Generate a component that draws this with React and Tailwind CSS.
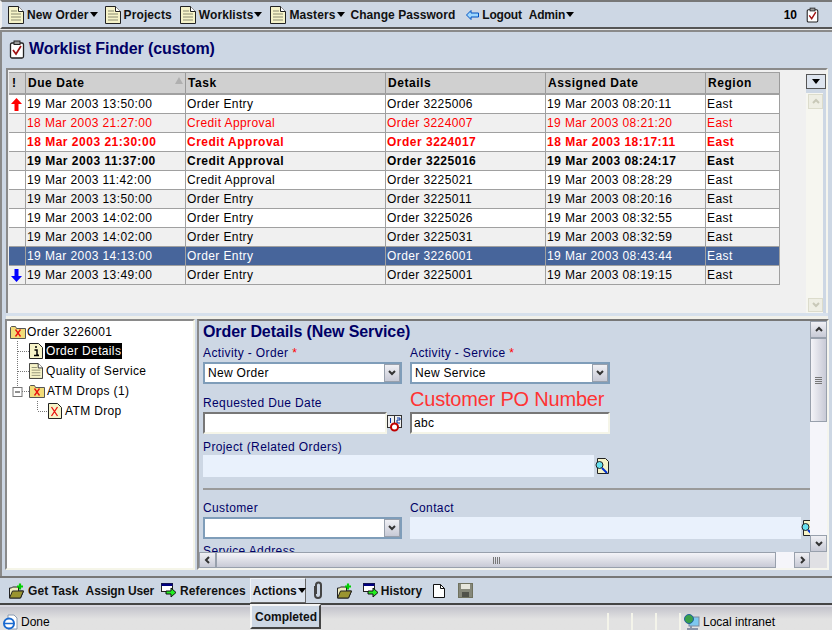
import React from 'react';

const ROWS = [
  ['19 Mar 2003 13:50:00', 'Order Entry', 'Order 3225006', '19 Mar 2003 08:20:11', 'up', ''],
  ['18 Mar 2003 21:27:00', 'Credit Approval', 'Order 3224007', '19 Mar 2003 08:21:20', '', 'text-[#ff0000]'],
  ['18 Mar 2003 21:30:00', 'Credit Approval', 'Order 3224017', '18 Mar 2003 18:17:11', '', 'text-[#ff0000] font-bold tracking-[0.5px]'],
  ['19 Mar 2003 11:37:00', 'Credit Approval', 'Order 3225016', '19 Mar 2003 08:24:17', '', 'text-black font-bold tracking-[0.5px]'],
  ['19 Mar 2003 11:42:00', 'Credit Approval', 'Order 3225021', '19 Mar 2003 08:28:29', '', 'text-black'],
  ['19 Mar 2003 13:50:00', 'Order Entry', 'Order 3225011', '19 Mar 2003 08:20:16', '', 'text-black'],
  ['19 Mar 2003 14:02:00', 'Order Entry', 'Order 3225026', '19 Mar 2003 08:32:55', '', 'text-black'],
  ['19 Mar 2003 14:02:00', 'Order Entry', 'Order 3225031', '19 Mar 2003 08:32:59', '', 'text-black'],
  ['19 Mar 2003 14:13:00', 'Order Entry', 'Order 3226001', '19 Mar 2003 08:43:44', '', 'text-white'],
  ['19 Mar 2003 13:49:00', 'Order Entry', 'Order 3225001', '19 Mar 2003 08:19:15', 'down', 'text-black'],
];

function PageIcon({ className = '', width = 16 }) {
  return (
    <svg width={width} height="18" viewBox="0 0 16 18" className={`shrink-0 ${className}`}>
      <path d="M.5.5h10l5 5v12H.5z" fill="#f6f3c8" stroke="#222" />
      <path d="M10.500.5v5h5" fill="#fff" stroke="#222" />
      <path d="M3 5h6M3 8h10M3 11h10M3 14h10" stroke="#8a8a70" />
    </svg>
  );
}

function Caret({ className = '' }) {
  return <span className={`inline-block w-0 h-0 border-l-[4px] border-r-[4px] border-t-[5px] border-l-transparent border-r-transparent border-t-black ${className}`} />;
}

function Clipboard({ size = 16 }) {
  return (
    <svg width={size} height={size + 3} viewBox="0 0 16 19" className="shrink-0">
      <rect x="1.500" y="3" width="13" height="15" rx="1.500" fill="#fff" stroke="#222" strokeWidth="1.300" />
      <rect x="5" y="1" width="6" height="3.500" fill="#999" stroke="#222" />
      <path d="M4 10l3 4 5-8" fill="none" stroke="#a01010" strokeWidth="1.700" />
    </svg>
  );
}

function FolderX({ className = '' }) {
  return (
    <svg width="16" height="14" viewBox="0 0 16 14" className={`shrink-0 ${className}`}>
      <path d="M.5 13.500v-11l1-1h4l1 2h9v10z" fill="#f2dc78" stroke="#555" />
      <path d="M5.500 4.500l5 7M10.500 4.500l-5 7" stroke="#e81010" strokeWidth="1.300" />
    </svg>
  );
}

function FolderPlus() {
  return (
    <svg width="17" height="16" viewBox="0 0 17 16" className="shrink-0">
      <path d="M1.500 15V5h2l1-1h6v4h5l-3 7z" fill="#f0eec0" stroke="#222" />
      <path d="M1.500 15l3-7h11l-3 7z" fill="#9a9430" stroke="#222" />
      <path d="M12 .5v6M9 3.500h6" stroke="#00d000" strokeWidth="2.200" />
    </svg>
  );
}

function RefArrow() {
  return (
    <svg width="16" height="15" viewBox="0 0 16 15" className="shrink-0">
      <rect x=".5" y=".5" width="11" height="8" fill="#fff" stroke="#222" />
      <rect x=".5" y=".5" width="11" height="2.500" fill="#000080" />
      <path d="M5 8h5V5l5 4.500-5 4.500v-3H5z" fill="#22ee22" stroke="#111" />
    </svg>
  );
}

function ToolItem({ label, icon, caret, className = '', textClass = 'tracking-[0.1px]' }) {
  return (
    <span className={`flex items-center whitespace-nowrap ${className}`}>
      {icon}
      <span className={`font-bold text-[12px] text-[#111] ${textClass}`}>{label}</span>
      {caret && <Caret className="ml-px" />}
    </span>
  );
}

function HeaderCell({ className, children }) {
  return (
    <div className={`h-[20px] flex items-center pl-[2px] font-bold text-[12px] tracking-[0.55px] bg-[#d0d0d0] border-r border-[#9a9a9a] ${className}`}>
      {children}
    </div>
  );
}

function WorkRow({ row, index }) {
  const [due, task, details, assigned, arrow, tone] = row;
  const selected = tone === 'text-white';
  const bg = selected ? 'bg-[#47659b]' : index % 2 === 0 ? 'bg-white' : 'bg-[#f0f0f0]';
  const cell = 'h-[19px] flex items-center pl-px border-r border-b border-[#a0a0a0] whitespace-nowrap';
  return (
    <div className={`flex text-[12px] tracking-[0.4px] ${bg} ${tone}`}>
      <div className={`${cell} w-[17px] !pl-[2px]`}>
        {arrow === 'up' && (
          <svg width="11" height="13" viewBox="0 0 11 13"><path d="M5.500 0L11 6H7.500v7h-4V6H0z" fill="#ff0000" /></svg>
        )}
        {arrow === 'down' && (
          <svg width="11" height="13" viewBox="0 0 11 13"><path d="M5.500 13L11 7H7.500V0h-4v7H0z" fill="#0000ff" /></svg>
        )}
      </div>
      <div className={`${cell} w-[160px]`}>{due}</div>
      <div className={`${cell} w-[200px]`}>{task}</div>
      <div className={`${cell} w-[160px]`}>{details}</div>
      <div className={`${cell} w-[160px]`}>{assigned}</div>
      <div className={`${cell} w-[74px]`}>East</div>
    </div>
  );
}

function Chevron({ dir = 'down', light }) {
  const d = { down: 'M2 3l3 3 3-3', up: 'M2 6l3-3 3 3', left: 'M6 2L3 5l3 3', right: 'M4 2l3 3-3 3' }[dir];
  return (
    <svg width="10" height="10" viewBox="0 0 10 10">
      <path d={d} fill="none" stroke={light ? '#c8c8b8' : '#333'} strokeWidth="2" />
    </svg>
  );
}

function ScrollBtn({ dir, className = '', light }) {
  return (
    <div className={`flex items-center justify-center border ${light ? 'border-[#dcdccc] bg-[#eeeee4]' : 'border-[#98a0ac] bg-gradient-to-b from-[#f0f0f4] to-[#c8cad6]'} ${className}`}>
      <Chevron dir={dir} light={light} />
    </div>
  );
}

function Select({ value, className = '' }) {
  return (
    <div className={`h-[22px] flex items-center bg-white border-2 border-[#7f9db9] text-[12px] text-black tracking-[0.3px] ${className}`}>
      <span className="flex-1 pl-[3px]">{value}</span>
      <ScrollBtn dir="down" className="w-[16px] h-[18px]" />
    </div>
  );
}

function SunkenInput({ value, className = '' }) {
  return (
    <div className={`h-[22px] flex items-center pl-[2px] bg-white border-2 border-t-[#777] border-l-[#777] border-r-[#f5f5e8] border-b-[#f5f5e8] text-[12px] text-black tracking-[0.3px] ${className}`}>
      {value}
    </div>
  );
}

function Label({ children, className = '' }) {
  return <div className={`text-[12px] leading-[14px] text-[#000066] tracking-[0.38px] whitespace-nowrap ${className}`}>{children}</div>;
}

function SearchDoc() {
  return (
    <svg width="14" height="16" viewBox="0 0 14 16" className="shrink-0">
      <path d="M2.500.5h8l3 3v12h-11z" fill="#f6f3c8" stroke="#222" />
      <circle cx="4.500" cy="7" r="3.500" fill="#66e0f0" stroke="#222" />
      <path d="M7 10l5 5" stroke="#0030d0" strokeWidth="2" />
    </svg>
  );
}

function TreeRow({ guide, icon, label, selected, labelClass = 'ml-[2px]', className = '' }) {
  return (
    <div className={`flex items-center h-[20px] ${className}`}>
      {guide}
      {icon}
      <span className={`px-px text-[12px] leading-[16px] tracking-[0.35px] whitespace-nowrap ${labelClass} ${selected ? 'bg-black text-white' : 'text-black'}`}>{label}</span>
    </div>
  );
}

function Guide({ last, minus, width = 12 }) {
  return (
    <svg width={width} height="20" viewBox={`0 0 ${width} 20`} className="shrink-0 overflow-visible">
      <path d={last ? 'M.5 0v10' : 'M.5 0v20'} stroke="#777" strokeDasharray="1 1" />
      <path d={`M1 10.500h${width}`} stroke="#777" strokeDasharray="1 1" />
      {minus && <rect x="-4" y="6.500" width="9" height="9" fill="#fff" stroke="#777" />}
      {minus && <path d="M-2 11h5" stroke="#222" />}
    </svg>
  );
}

export default function App() {
  return (
    <div className="relative w-[832px] h-[630px] overflow-hidden flex flex-col bg-[#cdd7e4] text-black font-['Liberation_Sans',Arial,sans-serif]">
      {/* main toolbar */}
      <div className="h-[29px] shrink-0 flex items-center border-t-2 border-b-2 border-t-[#777] border-b-[#555] border-l-2 border-l-[#f0f0f0] pl-[6px]">
        <ToolItem label="New Order" caret icon={<PageIcon className="mr-[3px]" />} />
        <ToolItem label="Projects" icon={<PageIcon className="mr-[3px]" />} className="ml-[7px]" />
        <ToolItem label="Worklists" caret icon={<PageIcon className="mr-[3px]" />} className="ml-[8px]" />
        <ToolItem label="Masters" caret icon={<PageIcon className="mr-[3px]" />} className="ml-[8px]" />
        <ToolItem label="Change Password" className="ml-[6px]" textClass="tracking-[0.05px]" />
        <ToolItem
          label="Logout"
          className="ml-[11px]"
          textClass="tracking-[-0.2px]"
          icon={
            <svg width="13" height="10" viewBox="0 0 13 10" className="mr-[3px]">
              <path d="M.5 5L5 .5V3h7.500v4H5v2.500z" fill="#9ed8ff" stroke="#0050c0" />
            </svg>
          }
        />
        <ToolItem label="Admin" caret className="ml-[7px]" textClass="tracking-[-0.2px]" />
        <span className="ml-auto font-bold text-[12px]">10</span>
        <span className="ml-[9px] mr-[13px]"><Clipboard size={13} /></span>
      </div>
      <div className="h-[3px] shrink-0 border-b-2 border-[#8a8a8a] bg-[#e8e8e8]" />

      <div className="shrink-0 flex flex-col border-l-2 border-[#8a8a8a]">
        {/* worklist title */}
        <div className="h-[36px] shrink-0 flex items-center pl-[7px] pb-[2px]">
          <Clipboard size={16} />
          <span className="ml-[4px] text-[16px] font-bold text-[#000066] tracking-[-0.1px]">Worklist Finder (custom)</span>
        </div>

        {/* worklist table */}
        <div className="h-[245px] shrink-0 ml-[4px] mr-[4px] flex bg-[#f0f0f0] border-2 border-b-0 border-t-[#8a8a8a] border-l-[#8a8a8a] border-r-[#f5f5ee]">
          <div className="w-[798px] pl-px pt-[2px] overflow-hidden">
            <div className="flex border-t border-b-2 border-[#a0a0a0] w-[771px]">
              <HeaderCell className="w-[17px] !pl-[3px]">!</HeaderCell>
              <HeaderCell className="w-[160px] relative">
                Due Date
                <span className="absolute right-[2px] top-[4px] w-0 h-0 border-l-[4px] border-r-[4px] border-b-[7px] border-l-transparent border-r-transparent border-b-[#b0b0b0]" />
              </HeaderCell>
              <HeaderCell className="w-[200px]">Task</HeaderCell>
              <HeaderCell className="w-[160px]">Details</HeaderCell>
              <HeaderCell className="w-[160px]">Assigned Date</HeaderCell>
              <HeaderCell className="w-[74px]">Region</HeaderCell>
            </div>
            <div className="w-[771px]">
              {ROWS.map((row, i) => <WorkRow key={row[0] + row[2]} row={row} index={i} />)}
            </div>
          </div>
          <div className="flex-1 flex flex-col bg-[#cdd7e4]">
            <div className="h-[4px] bg-[#f0f0f0]" />
            <div className="h-[15px] flex items-center justify-center border border-[#555] bg-[#dde4ee]"><Caret /></div>
            <div className="h-[4px]" />
            <div className="flex-1 flex flex-col justify-between bg-[#f6f6f0] mr-[3px] pt-px pl-[2px]">
              <ScrollBtn dir="up" light className="h-[15px]" />
              <ScrollBtn dir="down" light className="h-[14px] mb-[1px]" />
            </div>
          </div>
        </div>
        <div className="ml-[4px] mr-[4px] h-[3px] bg-[#d6e0ec]" />
        <div className="ml-[4px] mr-[4px] h-[3px] bg-[#f0f0ea]" />

        {/* lower split */}
        <div className="h-[251px] shrink-0 ml-[3px] mr-[3px] flex">
          <div className="w-[190px] shrink-0 bg-white border-2 border-t-[#8a8a8a] border-l-[#8a8a8a] border-r-[#f5f5e8] border-b-[#f5f5e8] pl-[3px]">
            <TreeRow icon={<FolderX />} label="Order 3226001" labelClass="" className="h-[21px]" />
            <div className="pl-[7px] -mt-[1px]">
              <TreeRow
                guide={<Guide />}
                selected
                label="Order Details"
                icon={
                  <svg width="14" height="16" viewBox="0 0 14 16" className="shrink-0">
                    <path d="M.5.5h9l4 4v11H.5z" fill="#f6f3c8" stroke="#222" />
                    <path d="M7 3v2M5.500 7H8v5h1.500M5 12.500h5" stroke="#000" strokeWidth="1.500" fill="none" />
                  </svg>
                }
              />
              <TreeRow guide={<Guide />} label="Quality of Service" icon={<PageIcon width={14} />} />
              <TreeRow guide={<Guide last minus />} label="ATM Drops (1)" labelClass="ml-[1px]" icon={<FolderX />} />
              <div className="pl-[20px]">
                <TreeRow
                  guide={<Guide last width={11} />}
                  label="ATM Drop"
                  labelClass="ml-[2px]"
                  icon={
                    <svg width="14" height="16" viewBox="0 0 14 16" className="shrink-0">
                      <path d="M.5.5h9l4 4v11H.5z" fill="#f6f3c8" stroke="#222" />
                      <path d="M3.500 4l6 9M9.500 4l-6 9" stroke="#e81010" strokeWidth="1.300" />
                    </svg>
                  }
                />
              </div>
            </div>
          </div>

          <div className="w-[2px] shrink-0" />

          <div className="flex-1 min-w-0 flex flex-col border-2 border-t-[#777] border-l-[#8a8a8a] border-b-[#f5f5ee] border-r-[#f5f5ee]">
            <div className="flex-1 min-h-0 flex">
              <div className="flex-1 min-w-0 overflow-hidden pl-[4px] pt-[2px]">
                <div className="text-[16px] leading-[18px] font-bold text-[#000066] tracking-[-0.1px]">Order Details (New Service)</div>
                <div className="grid grid-cols-[207px_1fr] mt-[5px]">
                  <div>
                    <Label>Activity - Order <span className="text-[#ff0000]">*</span></Label>
                    <Select value="New Order" className="w-[199px] mt-[2px]" />
                    <Label className="mt-[12px]">Requested Due Date</Label>
                    <div className="flex items-center mt-[2px]">
                      <SunkenInput className="w-[184px]" />
                      <svg width="15" height="17" viewBox="0 0 15 17" className="shrink-0">
                        <rect x=".5" y=".5" width="14" height="12" fill="#f0f0f0" stroke="#333" />
                        <path d="M7.500 1v11" stroke="#333" />
                        <path d="M3.500 3v5M10 3h3v2h-3v3h3" stroke="#0030a0" fill="none" />
                        <circle cx="7.500" cy="12" r="3.500" fill="#fff" stroke="#c00000" strokeWidth="2" />
                      </svg>
                    </div>
                  </div>
                  <div>
                    <Label>Activity - Service <span className="text-[#ff0000]">*</span></Label>
                    <Select value="New Service" className="w-[200px] mt-[2px]" />
                    <div className="text-[20px] leading-[23px] text-[#ff3333] mt-[4px] tracking-[-0.2px] whitespace-nowrap">Customer PO Number</div>
                    <SunkenInput value="abc" className="w-[200px] mt-[1px]" />
                  </div>
                </div>
                <Label className="mt-[6px]">Project (Related Orders)</Label>
                <div className="flex items-center mt-[1px]">
                  <div className="w-[391px] h-[22px] bg-[#e9f1fc]" />
                  <span className="ml-px"><SearchDoc /></span>
                </div>
                <div className="h-[2px] bg-[#9a9a9a] mt-[11px] w-[800px]" />
                <div className="grid grid-cols-[207px_1fr] mt-[11px]">
                  <div>
                    <Label>Customer</Label>
                    <Select className="w-[199px] mt-[2px]" />
                  </div>
                  <div>
                    <Label>Contact</Label>
                    <div className="flex items-center mt-[2px]">
                      <div className="w-[391px] h-[22px] shrink-0 bg-[#e9f1fc]" />
                      <SearchDoc />
                    </div>
                  </div>
                </div>
                <Label className="mt-[5px]">Service Address</Label>
              </div>
              <div className="w-[17px] shrink-0 flex flex-col bg-[#f5f5fa]">
                <ScrollBtn dir="up" className="h-[17px]" />
                <div className="h-[84px] flex items-center justify-center border border-[#98a0ac] bg-gradient-to-r from-[#f4f4f8] to-[#c8cad6]">
                  <div className="w-[7px] h-[7px] bg-[repeating-linear-gradient(to_bottom,#777_0,#777_1px,transparent_1px,transparent_2px)]" />
                </div>
                <div className="flex-1" />
                <ScrollBtn dir="down" className="h-[17px]" />
              </div>
            </div>
            <div className="h-[16px] shrink-0 flex bg-[#f5f5fa]">
              <ScrollBtn dir="left" className="w-[17px]" />
              <div className="w-[560px] flex items-center justify-center border border-[#98a0ac] bg-gradient-to-b from-[#f4f4f8] to-[#c8cad6]">
                <div className="w-[7px] h-[7px] bg-[repeating-linear-gradient(to_right,#777_0,#777_1px,transparent_1px,transparent_2px)]" />
              </div>
              <div className="flex-1" />
              <ScrollBtn dir="right" className="w-[16px]" />
              <div className="w-[17px] bg-[#e0e0e4]" />
            </div>
          </div>
        </div>

        <div className="h-[6px] shrink-0" />
      </div>

      {/* bottom toolbar */}
      <div className="h-[29px] shrink-0 flex items-center border-t-2 border-b-2 border-t-[#777] border-b-[#444] pl-[8px]">
        <ToolItem label="Get Task" icon={<FolderPlus />} className="gap-[3px]" />
        <ToolItem label="Assign User" className="ml-[7px]" textClass="tracking-[-0.15px]" />
        <ToolItem label="References" icon={<RefArrow />} className="ml-[7px] gap-[3px]" />
        <div className="ml-[4px] w-[56px] h-[25px] pl-[2px] flex items-center bg-[#dde4ee] border border-[#f0f4f8] border-b-[#666] border-r-[#666]">
          <span className="font-bold text-[12px] text-[#111]">Actions</span>
          <Caret className="ml-px" />
        </div>
        <svg width="12" height="19" viewBox="0 0 12 19" className="ml-[6px] shrink-0">
          <path d="M3 5v9a3 3 0 006 0V4a2.500 2.500 0 00-5 0v9" fill="none" stroke="#444" strokeWidth="2" />
        </svg>
        <span className="ml-[12px]"><FolderPlus /></span>
        <span className="ml-[10px]"><ToolItem label="History" icon={<RefArrow />} className="gap-[2px]" textClass="tracking-[0px]" /></span>
        <svg width="12" height="14" viewBox="0 0 12 14" className="ml-[11px] shrink-0">
          <path d="M.5.5h7l4 4v9H.5z" fill="#fff" stroke="#111" />
          <path d="M7.500.5v4h4" fill="none" stroke="#111" />
        </svg>
        <svg width="15" height="15" viewBox="0 0 15 15" className="ml-[13px] shrink-0">
          <rect x=".5" y=".5" width="14" height="14" fill="#86887a" stroke="#70725f" />
          <rect x="3" y="1" width="9" height="5" fill="#e6e6dc" />
          <rect x="4" y="9" width="7" height="5" fill="#50524a" />
        </svg>
      </div>

      <div className="h-[2px] shrink-0 bg-[#d8d8e0]" />

      {/* status bar */}
      <div className="flex-1 flex items-center pt-[6px] bg-gradient-to-b from-[#c4c4cc] via-[#e2e2e2] to-[#e2e2e2] text-[12px] text-black">
        <svg width="16" height="16" viewBox="0 0 16 16" className="ml-[2px] shrink-0">
          <path d="M6 1h6l3 3v11H6z" fill="#fff" stroke="#8a9ab0" />
          <circle cx="7" cy="9.500" r="5" fill="#fff" stroke="#1a6ad0" strokeWidth="2" />
          <path d="M3 9.500h8" stroke="#1a6ad0" strokeWidth="1.500" />
        </svg>
        <span className="ml-[3px] w-[586px]">Done</span>
        <span className="w-[24px] h-[18px] border-l-2 border-[#f4f4ea]" />
        <span className="w-[24px] h-[18px] border-l-2 border-[#f4f4ea]" />
        <span className="w-[24px] h-[18px] border-l-2 border-[#f4f4ea]" />
        <span className="w-[5px] h-[18px] border-l-2 border-[#f4f4ea]" />
        <svg width="16" height="16" viewBox="0 0 16 16" className="shrink-0">
          <rect x="5" y="3" width="10" height="9" fill="#7ec8f0" stroke="#7a8aa0" />
          <circle cx="5" cy="5" r="4.500" fill="#3aa04a" stroke="#2060a0" />
          <path d="M7 12v2M3 15h11" stroke="#8a94a8" strokeWidth="2" />
        </svg>
        <span className="ml-[3px]">Local intranet</span>
      </div>

      {/* popup menu under Actions */}
      <div className="absolute left-[250px] top-[604px] w-[71px] h-[25px] flex items-center pl-[3px] bg-[#cdd7e4] border-2 border-t-[#f5f5f5] border-l-[#f5f5f5] border-r-[#444] border-b-[#444] font-bold text-[12px] text-[#111]">
        Completed
      </div>
    </div>
  );
}
